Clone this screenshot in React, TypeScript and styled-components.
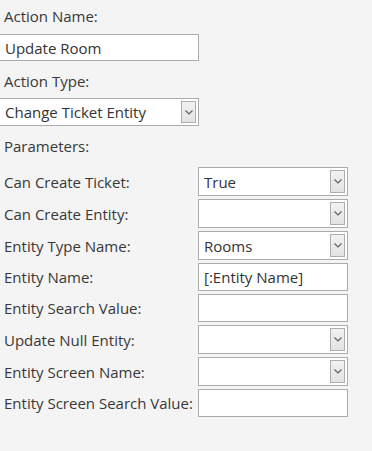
import React from "react";
import styled, { createGlobalStyle } from "styled-components";

const GlobalStyle = createGlobalStyle`
  html, body {
    margin: 0;
    padding: 0;
    background: #f4f4f4;
  }
  body {
    font-family: "Open Sans", "Noto Sans", sans-serif;
    font-size: 15px;
    color: #383838;
  }
`;

const Page = styled.div`
  width: 372px;
  height: 451px;
  background: #f4f4f4;
`;

const FieldLabel = styled.div<{ $first?: boolean; $below?: number }>`
  padding-left: 4px;
  line-height: 20px;
  margin: ${(p) => (p.$first ? 6 : 10)}px 0 ${(p) => p.$below ?? 7}px;
  white-space: nowrap;
`;

const TextBox = styled.input`
  box-sizing: border-box;
  display: block;
  width: 150px;
  height: 28px;
  margin: 0;
  padding: 0 5px;
  border: 1px solid #ababab;
  background: #fff;
  font: inherit;
  color: #333;
  outline: none;
`;

const WideTextBox = styled(TextBox)`
  width: 200px;
  height: 27px;
  margin-left: -1px;
`;

const ComboBox = styled.div<{ $wide?: boolean }>`
  box-sizing: border-box;
  display: flex;
  align-items: center;
  width: ${(p) => (p.$wide ? 200 : 150)}px;
  height: ${(p) => (p.$wide ? 28 : 29)}px;
  margin-left: ${(p) => (p.$wide ? -1 : 0)}px;
  padding: 2px 2px 2px 5px;
  border: 1px solid #ababab;
  background: #fff;
  color: #333;
`;

const ComboValue = styled.span`
  flex: 1;
  white-space: nowrap;
  overflow: hidden;
`;

const DropButton = styled.span`
  box-sizing: border-box;
  display: flex;
  align-items: center;
  justify-content: center;
  width: 15px;
  height: 100%;
  border: 1px solid #adadad;
  background: linear-gradient(#f2f2f2, #e3e3e3);
`;

const ParamGrid = styled.div`
  display: grid;
  grid-template-columns: 198px 150px;
  row-gap: 3px;
  align-items: center;
`;

const ParamLabel = styled.div`
  padding-left: 4px;
  white-space: nowrap;
`;

const Chevron = () => (
  <svg width="8" height="5" viewBox="0 0 8 5">
    <path d="M0.5 0.5 L4 4 L7.5 0.5" fill="none" stroke="#606060" strokeWidth="1.2" />
  </svg>
);

const Combo = ({ value, wide }: { value?: string; wide?: boolean }) => (
  <ComboBox $wide={wide}>
    <ComboValue>{value}</ComboValue>
    <DropButton>
      <Chevron />
    </DropButton>
  </ComboBox>
);

type Param = { label: string; kind: "combo" | "text"; value?: string };

const params: Param[] = [
  { label: "Can Create Ticket:", kind: "combo", value: "True" },
  { label: "Can Create Entity:", kind: "combo" },
  { label: "Entity Type Name:", kind: "combo", value: "Rooms" },
  { label: "Entity Name:", kind: "text", value: "[:Entity Name]" },
  { label: "Entity Search Value:", kind: "text" },
  { label: "Update Null Entity:", kind: "combo" },
  { label: "Entity Screen Name:", kind: "combo" },
  { label: "Entity Screen Search Value:", kind: "text" },
];

export default function App() {
  return (
    <Page>
      <GlobalStyle />
      <FieldLabel $first $below={8}>Action Name:</FieldLabel>
      <WideTextBox defaultValue="Update Room" />
      <FieldLabel>Action Type:</FieldLabel>
      <Combo wide value="Change Ticket Entity" />
      <FieldLabel $below={11}>Parameters:</FieldLabel>
      <ParamGrid>
        {params.map((p) => (
          <React.Fragment key={p.label}>
            <ParamLabel>{p.label}</ParamLabel>
            {p.kind === "combo" ? (
              <Combo value={p.value} />
            ) : (
              <TextBox defaultValue={p.value ?? ""} />
            )}
          </React.Fragment>
        ))}
      </ParamGrid>
    </Page>
  );
}
